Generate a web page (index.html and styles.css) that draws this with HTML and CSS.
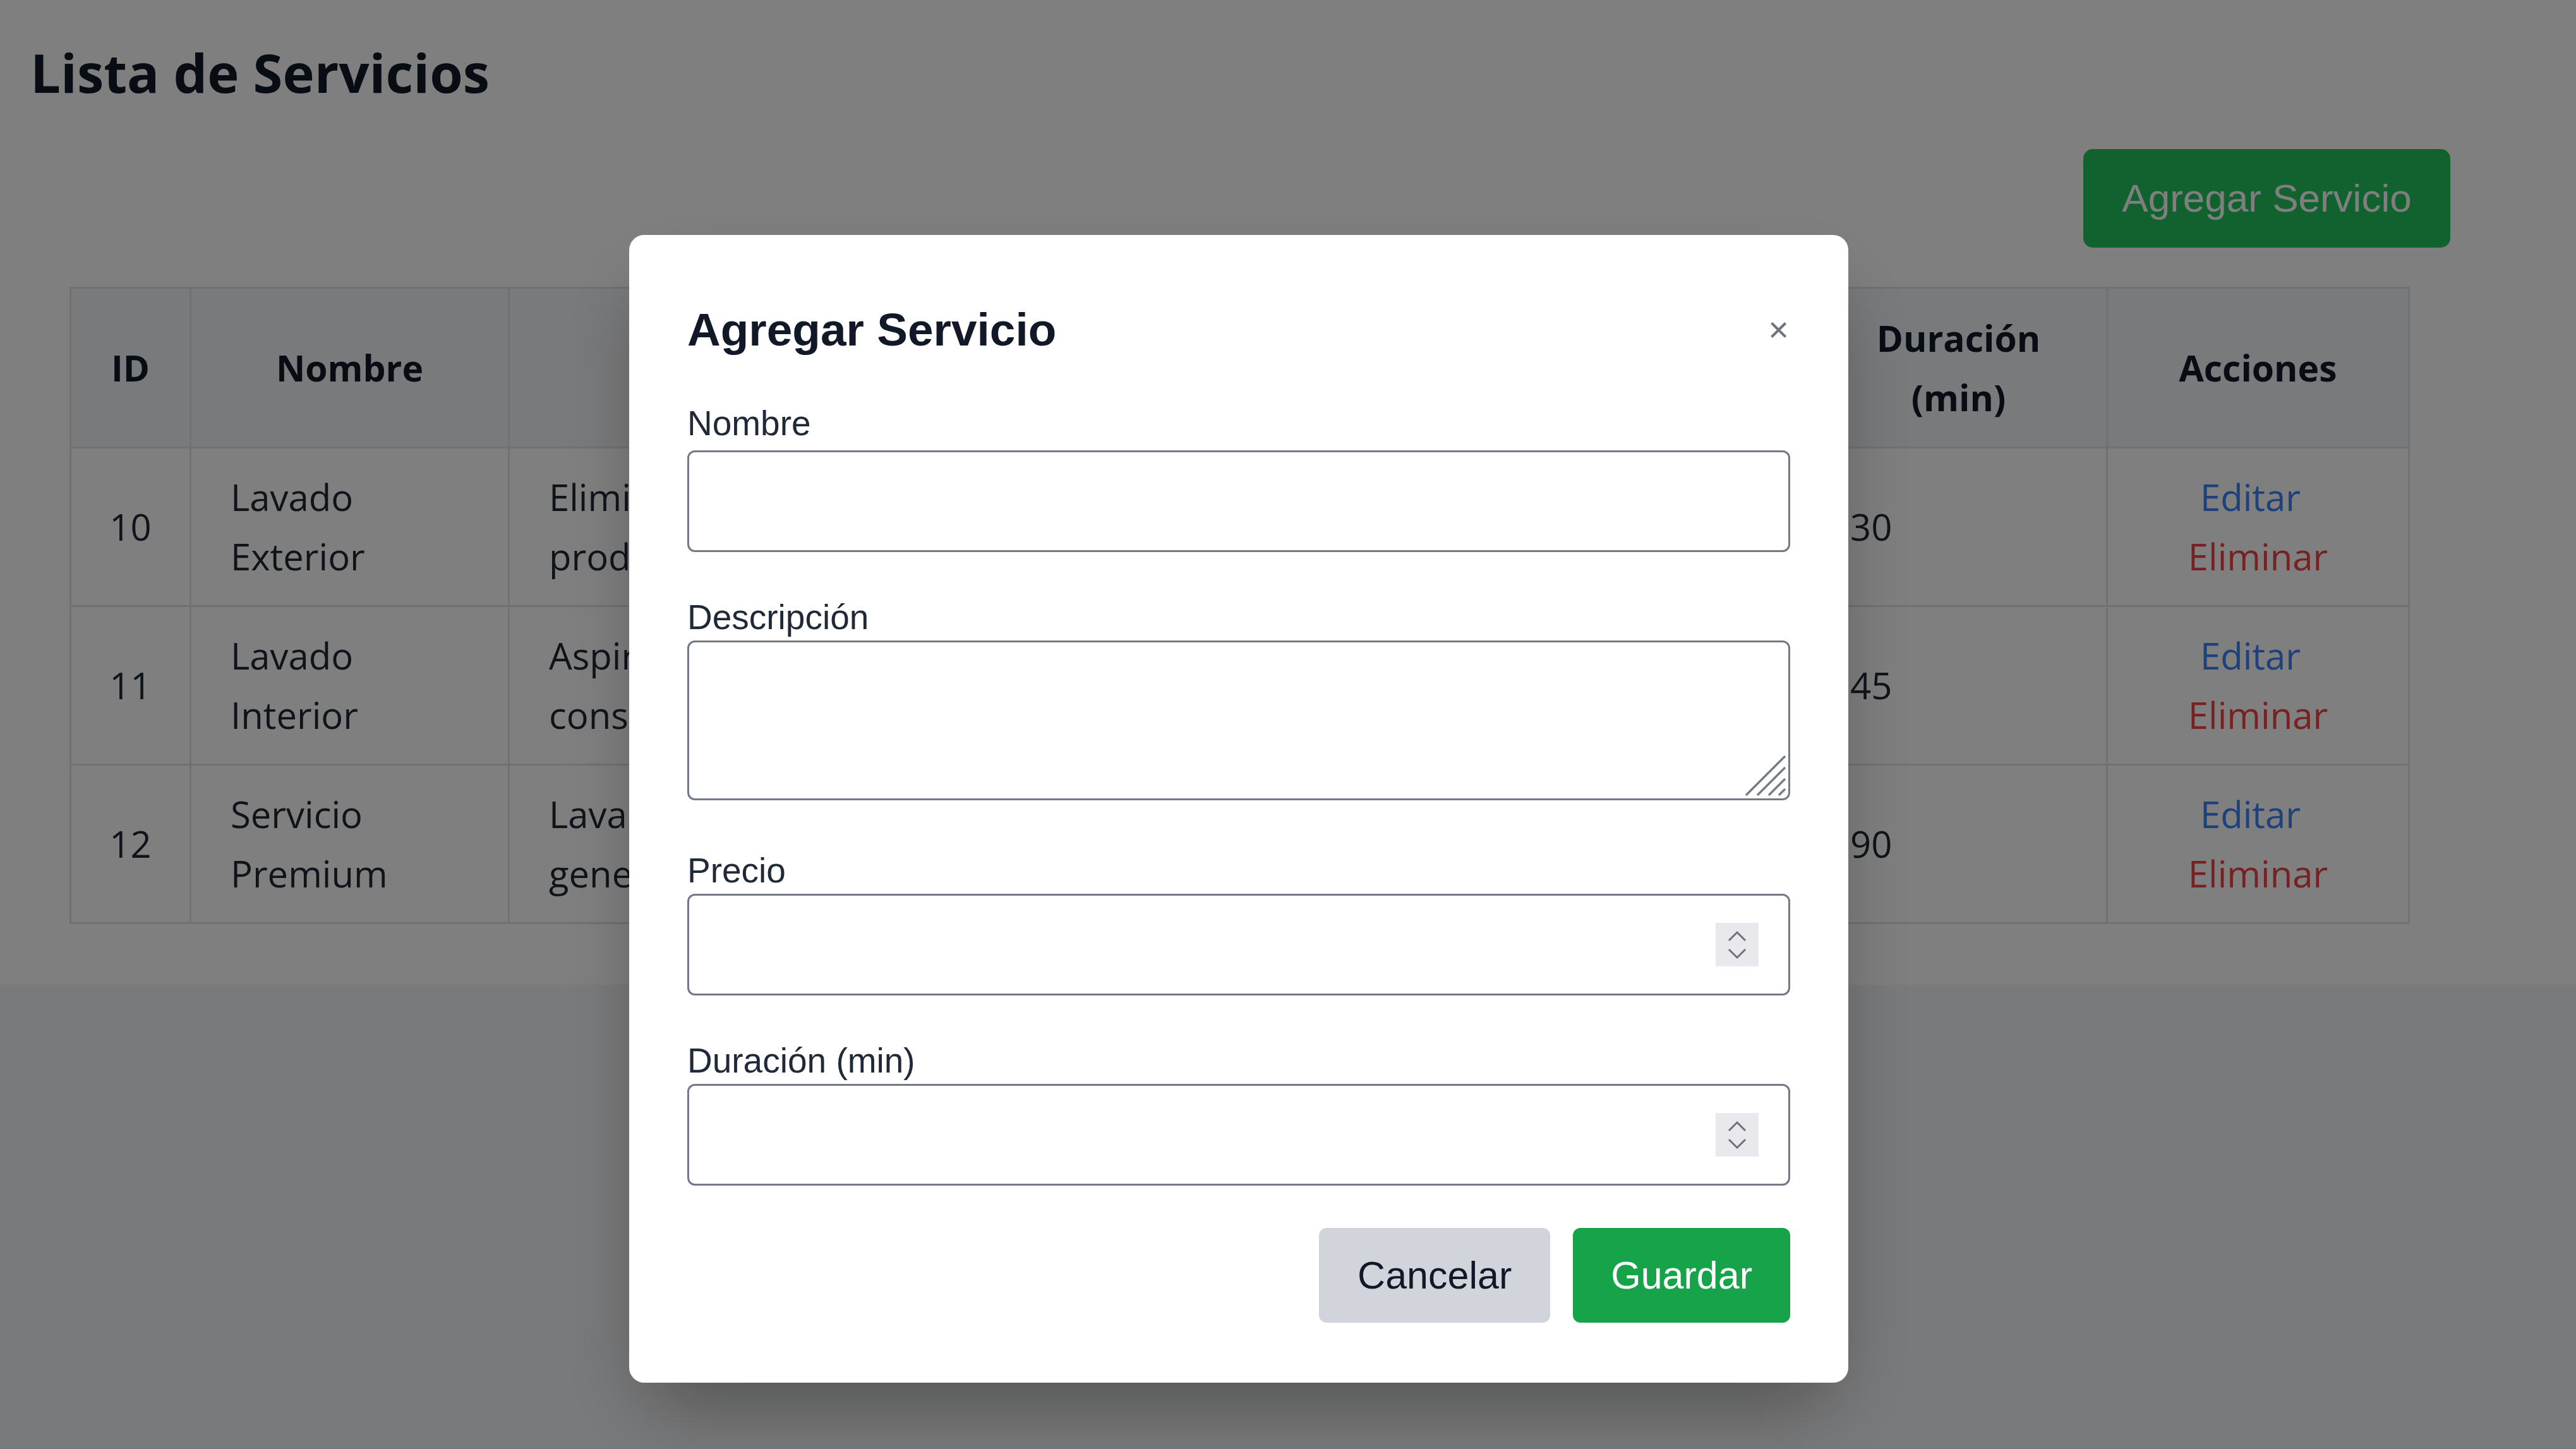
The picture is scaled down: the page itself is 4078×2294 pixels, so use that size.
FILE: index.html
```html
<!DOCTYPE html>
<html lang="es">
<head>
<meta charset="utf-8">
<title>Lista de Servicios</title>
<link rel="stylesheet" href="styles.css">
</head>
<body>
<main class="page">
  <h1 class="page-title">Lista de Servicios</h1>
  <div class="toolbar">
    <button class="btn-add" type="button">Agregar Servicio</button>
  </div>
  <table class="services">
    <colgroup>
      <col class="c-id"><col class="c-name"><col class="c-desc"><col class="c-price"><col class="c-dur"><col class="c-act">
    </colgroup>
    <thead>
      <tr><th>ID</th><th>Nombre</th><th>Descripción</th><th>Precio</th><th>Duración (min)</th><th>Acciones</th></tr>
    </thead>
    <tbody>
      <tr>
        <td class="id">10</td>
        <td>Lavado Exterior</td>
        <td>Eliminación de suciedad exterior con<br>productos especiales</td>
        <td>$15.00</td>
        <td>30</td>
        <td class="actions"><a class="edit" href="#">Editar</a> <a class="del" href="#">Eliminar</a></td>
      </tr>
      <tr>
        <td class="id">11</td>
        <td>Lavado Interior</td>
        <td>Aspirado y limpieza interior del vehículo,<br>consolas y tapicería</td>
        <td>$20.00</td>
        <td>45</td>
        <td class="actions"><a class="edit" href="#">Editar</a> <a class="del" href="#">Eliminar</a></td>
      </tr>
      <tr>
        <td class="id">12</td>
        <td>Servicio Premium</td>
        <td>Lavado completo, encerado y limpieza<br>general del vehículo</td>
        <td>$45.00</td>
        <td>90</td>
        <td class="actions"><a class="edit" href="#">Editar</a> <a class="del" href="#">Eliminar</a></td>
      </tr>
    </tbody>
  </table>
</main>

<div class="overlay">
  <div class="modal" role="dialog" aria-labelledby="modal-title">
    <div class="modal-head">
      <h2 class="modal-title" id="modal-title">Agregar Servicio</h2>
      <button class="close" type="button" aria-label="Cerrar">×</button>
    </div>
    <form class="form">
      <div class="field field-first">
        <label for="f-nombre">Nombre</label>
        <input id="f-nombre" type="text">
      </div>
      <div class="field field-area">
        <label for="f-desc">Descripción</label>
        <div class="box-wrap">
          <textarea id="f-desc"></textarea>
          <svg class="grip" viewBox="0 0 70 70" aria-hidden="true">
            <path d="M4 66 L66 4 M22 66 L66 22 M40 66 L66 40 M56 66 L66 56"/>
          </svg>
        </div>
      </div>
      <div class="field">
        <label for="f-precio">Precio</label>
        <div class="box-wrap">
          <input id="f-precio" type="number">
          <span class="spin" aria-hidden="true">
            <svg viewBox="0 0 68 69"><path d="M21 28 L34 15 L47 28 M21 42 L34 55 L47 42"/></svg>
          </span>
        </div>
      </div>
      <div class="field field-last">
        <label for="f-duracion">Duración (min)</label>
        <div class="box-wrap">
          <input id="f-duracion" type="number">
          <span class="spin" aria-hidden="true">
            <svg viewBox="0 0 68 69"><path d="M21 28 L34 15 L47 28 M21 42 L34 55 L47 42"/></svg>
          </span>
        </div>
      </div>
      <div class="form-actions">
        <button class="btn-cancel" type="button">Cancelar</button>
        <button class="btn-save" type="submit">Guardar</button>
      </div>
    </form>
  </div>
</div>
</body>
</html>
```

FILE: styles.css
```css
* {
  box-sizing: border-box;
}

html {
  background: #f3f4f6;
}

body {
  margin: 0;
  min-height: 2294px;
  background: #f3f4f6;
  font-family: "Open Sans", "Noto Sans", sans-serif;
  color: #111827;
}

/* ---------- page ---------- */
.page {
  background: #ffffff;
  padding: 56px 48px 96px;
}

.page-title {
  margin: 0;
  font-size: 85px;
  line-height: 116px;
  font-weight: 700;
  color: #111827;
}

.toolbar {
  display: flex;
  justify-content: flex-end;
  margin-top: 64px;
  margin-right: 151px;
}

.btn-add {
  width: 581px;
  height: 156px;
  padding: 0;
  border: 0;
  border-radius: 15px;
  background: #22c55e;
  color: #ffffff;
  font-family: "Liberation Sans", Arial, sans-serif;
  font-size: 62px;
  line-height: 84px;
}

.services {
  margin: 62px 0 0 62px;
  width: 3702px;
  border-collapse: collapse;
  table-layout: fixed;
  font-size: 58px;
  line-height: 94px;
  color: #1f2937;
}

.c-id { width: 190px; }
.c-name { width: 504px; }
.c-desc { width: 1400px; }
.c-price { width: 660px; }
.c-dur { width: 470px; }
.c-act { width: 478px; }

.services th,
.services td {
  border: 3px solid #dfe2e7;
  padding: 30px 62px;
  text-align: left;
  vertical-align: middle;
  font-weight: 400;
}

.services th {
  background: #f3f4f6;
  font-weight: 700;
  font-size: 57px;
  text-align: center;
  padding: 31px 62px;
  color: #111827;
}

.services td.id {
  text-align: center;
  padding-left: 20px;
  padding-right: 20px;
}

.services td.actions {
  text-align: center;
}

.edit,
.del {
  text-decoration: none;
}

.edit {
  color: #3b82f6;
  margin-right: 24px;
}

.del {
  color: #ef4444;
}

/* ---------- modal ---------- */
.overlay {
  position: fixed;
  inset: 0;
  background: rgba(0, 0, 0, 0.5);
}

.modal {
  position: absolute;
  left: 996px;
  top: 372px;
  width: 1930px;
  padding: 102px 92px 95px;
  background: #ffffff;
  border-radius: 24px;
  box-shadow: 0 60px 120px -30px rgba(0, 0, 0, 0.35);
  font-family: "Liberation Sans", Arial, sans-serif;
  color: #111827;
}

.modal-head {
  display: flex;
  align-items: center;
  justify-content: space-between;
  margin-bottom: 64px;
}

.modal-title {
  margin: 0;
  font-size: 73px;
  line-height: 96px;
  font-weight: 700;
}

.close {
  padding: 0;
  margin-right: 2px;
  border: 0;
  background: none;
  color: #6b7280;
  font-family: "Liberation Sans", Arial, sans-serif;
  font-size: 56px;
  line-height: 1;
}

.field {
  margin-bottom: 67px;
}

.field-area {
  margin-bottom: 75px;
}

.field-last {
  margin-bottom: 67px;
}

.field label {
  display: block;
  margin-bottom: 1px;
  font-size: 55px;
  line-height: 72px;
  color: #1f2937;
}

.field-first label {
  margin-bottom: 7px;
}

.box-wrap {
  position: relative;
}

.field input,
.field textarea {
  display: block;
  width: 100%;
  margin: 0;
  padding: 0 30px;
  border: 3px solid #737a86;
  border-radius: 12px;
  background: #ffffff;
  font-family: "Liberation Sans", Arial, sans-serif;
  font-size: 55px;
  outline: none;
}

.field input {
  height: 161px;
  -moz-appearance: textfield;
  appearance: textfield;
}

.field input::-webkit-inner-spin-button,
.field input::-webkit-outer-spin-button {
  -webkit-appearance: none;
  margin: 0;
}

.field textarea {
  height: 253px;
  resize: none;
}

.grip {
  position: absolute;
  right: 4px;
  bottom: 4px;
  width: 70px;
  height: 70px;
  fill: none;
  stroke: #767c87;
  stroke-width: 3.5;
}

.spin {
  position: absolute;
  right: 50px;
  top: 46px;
  width: 68px;
  height: 69px;
  background: #e9e9ed;
}

.spin svg {
  display: block;
  width: 68px;
  height: 69px;
  fill: none;
  stroke: #6e717a;
  stroke-width: 3;
}

.form-actions {
  display: flex;
  justify-content: flex-end;
  gap: 36px;
}

.btn-cancel,
.btn-save {
  height: 150px;
  border: 0;
  border-radius: 12px;
  font-family: "Liberation Sans", Arial, sans-serif;
  font-size: 61px;
  line-height: 84px;
}

.btn-cancel {
  padding: 0 61px;
  background: #d1d5db;
  color: #111827;
}

.btn-save {
  padding: 0 60px;
  background: #16a34a;
  color: #ffffff;
}
```
